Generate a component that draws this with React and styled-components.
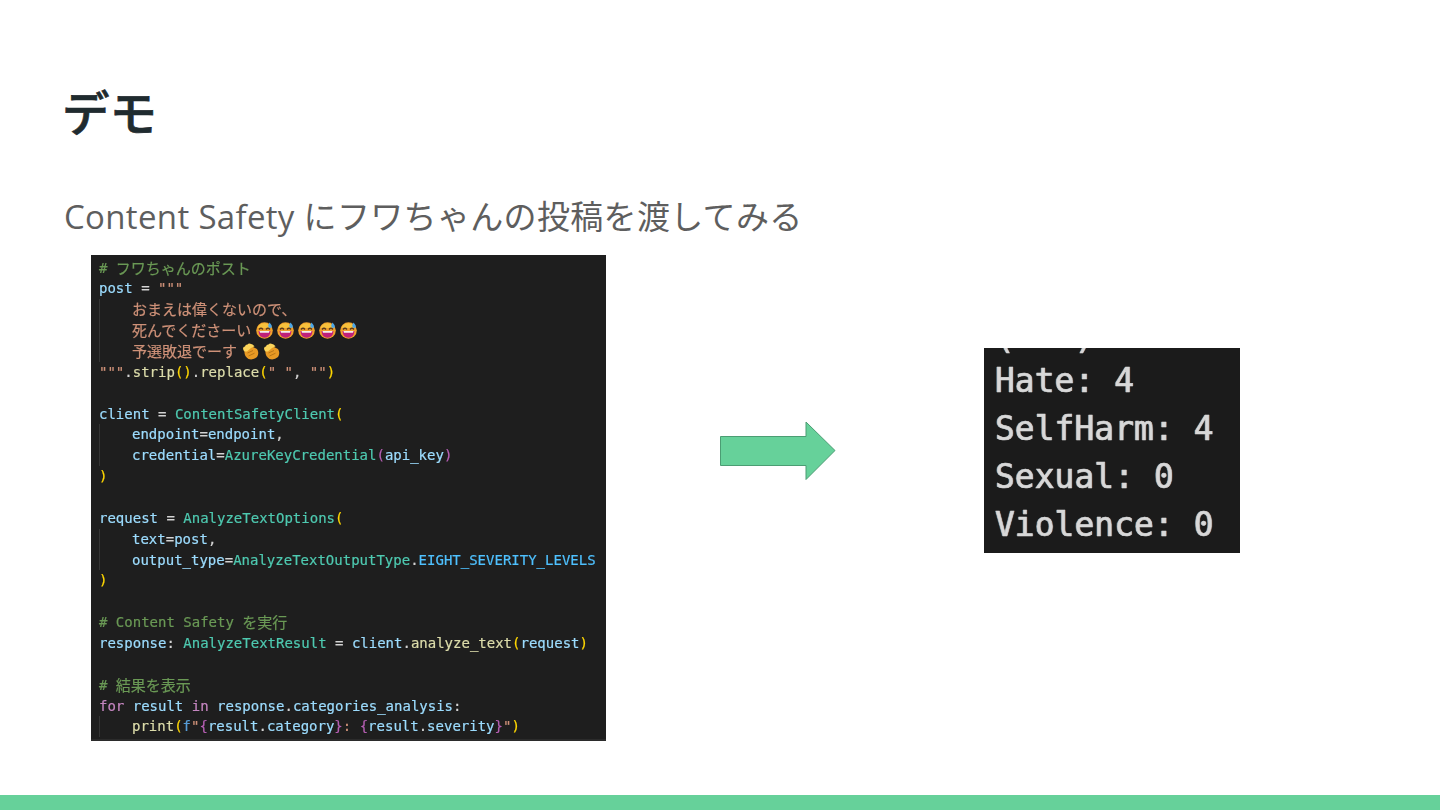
import React from "react";
import styled, { createGlobalStyle } from "styled-components";

const Global = createGlobalStyle`
  html, body { margin: 0; padding: 0; background: #fff; }
  #root { width: 1440px; height: 810px; }
`;

const Slide = styled.main`
  width: 1440px;
  height: 810px;
  overflow: hidden;
  display: flex;
  flex-direction: column;
  background: #fff;
  font-family: "Open Sans", "Noto Sans CJK JP", sans-serif;
`;

const Title = styled.h1`
  margin: 76px 0 0 62px;
  font: 500 47.5px/70px "Noto Sans CJK JP", sans-serif;
  -webkit-text-stroke: 0.7px currentColor;
  color: #1f2b2f;
`;

const Subtitle = styled.h2`
  margin: 46px 0 0 64px;
  font: 400 33px/50px "Open Sans", "Noto Sans CJK JP", sans-serif;
  letter-spacing: 0.33px;
  color: #5e5e5e;
`;

const Content = styled.section`
  display: flex;
  align-items: flex-start;
  padding-left: 91px;
  margin-top: 13px;
`;

const CodePanel = styled.div`
  flex: none;
  width: 515px;
  height: 486px;
  box-sizing: border-box;
  padding: 2.5px 0 0 8px;
  background: #1e1e1e;
  border-bottom: 2px solid #2b2b2b;
  font: 14px/20.86px "DejaVu Sans Mono", "Noto Sans CJK JP", monospace;
  color: #9cdcfe;
  white-space: pre;
  overflow: hidden;
  -webkit-text-stroke: 0.2px currentColor;
`;

const Line = styled.div`
  display: flex;
  align-items: center;
  height: 20.86px;
  filter: blur(0.35px);
`;

const Guide = styled.span`
  flex: none;
  align-self: stretch;
  width: 33px;
  box-sizing: border-box;
  border-left: 1px solid #343434;
`;

const Tok = styled.span`
  color: ${(p) => p.$c};
`;

const Ja = styled.span`
  font-family: "Noto Sans CJK JP", sans-serif;
  font-size: 15px;
  color: ${(p) => p.$c};
`;

const EmojiBox = styled.svg`
  flex: none;
  width: 17px;
  height: 17px;
  margin-left: ${(p) => p.$gap}px;
`;

const ArrowBox = styled.svg`
  flex: none;
  width: 116px;
  height: 60px;
  margin: 166px 0 0 114px;
`;

const ResultPanel = styled.div`
  flex: none;
  width: 256px;
  height: 205px;
  margin: 93px 0 0 148px;
  box-sizing: border-box;
  padding-left: 11px;
  background: #1b1b1b;
  color: #d8d8d8;
  font: 33px/48px "DejaVu Sans Mono", monospace;
  white-space: pre;
  overflow: hidden;
  -webkit-text-stroke: 0.6px currentColor;
`;

const ResultText = styled.div`
  margin-top: -39px;
  filter: blur(0.6px);
  text-shadow: -1px 0 rgba(120, 190, 230, 0.45), 1px 0 rgba(220, 130, 80, 0.35);
`;

const ClippedLine = styled.div`
  transform: translateY(5px);
`;

const Band = styled.footer`
  margin-top: auto;
  height: 15px;
  flex: none;
  background: #66d19a;
`;

const COMMENT = "#6a9955";
const STR = "#ce9178";
const CLS = "#4ec9b0";
const FN = "#dcdcaa";
const OP = "#d4d4d4";
const KW = "#c586c0";
const GOLD = "#ffd700";
const PINK = "#b65fb4";
const CONST = "#4fc1ff";
const BLUE = "#569cd6";

const SweatFace = ({ gap = 4 }) => (
  <EmojiBox $gap={gap} viewBox="0 0 17 17">
    <circle cx="8.5" cy="8.5" r="8.3" fill="#f0a02c" />
    <path d="M2 4.5A8.3 8.3 0 0 1 15 4.5L15 6 2 6Z" fill="#f7c13c" />
    <path d="M3 7.5Q5 5 7 7.5M10 7.5Q12 5 14 7.5" stroke="#5a3a1c" strokeWidth="1.3" fill="none" />
    <path d="M2.5 9H14.5Q14 15.8 8.5 15.8Q3 15.8 2.5 9Z" fill="#c0207a" />
    <path d="M3.5 9H13.5L13 10.8H4Z" fill="#f4f0ea" />
    <path d="M13.5 .5Q17 4 15.3 5.8Q12.8 6.4 12.2 4Q12.5 2.3 13.5 .5Z" fill="#4aa6e8" />
  </EmojiBox>
);

const Clap = ({ gap = 4 }) => (
  <EmojiBox $gap={gap} viewBox="0 0 17 17">
    <path d="M4 5L9 3L15 6Q17.5 10 15 14Q11 17.5 6.5 16Q2 13 2.5 8Z" fill="#e89a24" />
    <path d="M1 5.5Q1.2 3.6 3 3.6Q3.4 1.4 5.6 1.6Q6.4 .2 8.4 .8Q10.6 1.2 12.6 3.2L9 5 5 8.5 2.5 8.5Q1.2 7.4 1 5.5Z" fill="#fbd45a" />
    <path d="M5.5 10L11 7.5M6.5 13L12.5 10.2" stroke="#b97616" strokeWidth="1" fill="none" />
  </EmojiBox>
);

export default function App() {
  return (
    <Slide>
      <Global />
      <Title>デモ</Title>
      <Subtitle>Content Safety にフワちゃんの投稿を渡してみる</Subtitle>
      <Content>
        <CodePanel>
          <Line><Tok $c={COMMENT}># </Tok><Ja $c={COMMENT}>フワちゃんのポスト</Ja></Line>
          <Line>post <Tok $c={OP}>= </Tok><Tok $c={STR}>"""</Tok></Line>
          <Line><Guide /><Ja $c={STR}>おまえは偉くないので、</Ja></Line>
          <Line><Guide /><Ja $c={STR}>死んでくださーい</Ja><SweatFace gap={5} /><SweatFace /><SweatFace /><SweatFace /><SweatFace /></Line>
          <Line><Guide /><Ja $c={STR}>予選敗退でーす</Ja><Clap gap={5} /><Clap /></Line>
          <Line><Tok $c={STR}>"""</Tok><Tok $c={OP}>.</Tok><Tok $c={FN}>strip</Tok><Tok $c={GOLD}>()</Tok><Tok $c={OP}>.</Tok><Tok $c={FN}>replace</Tok><Tok $c={GOLD}>(</Tok><Tok $c={STR}>" "</Tok><Tok $c={OP}>, </Tok><Tok $c={STR}>""</Tok><Tok $c={GOLD}>)</Tok></Line>
          <Line />
          <Line>client <Tok $c={OP}>= </Tok><Tok $c={CLS}>ContentSafetyClient</Tok><Tok $c={GOLD}>(</Tok></Line>
          <Line><Guide />endpoint<Tok $c={OP}>=</Tok>endpoint<Tok $c={OP}>,</Tok></Line>
          <Line><Guide />credential<Tok $c={OP}>=</Tok><Tok $c={CLS}>AzureKeyCredential</Tok><Tok $c={PINK}>(</Tok>api_key<Tok $c={PINK}>)</Tok></Line>
          <Line><Tok $c={GOLD}>)</Tok></Line>
          <Line />
          <Line>request <Tok $c={OP}>= </Tok><Tok $c={CLS}>AnalyzeTextOptions</Tok><Tok $c={GOLD}>(</Tok></Line>
          <Line><Guide />text<Tok $c={OP}>=</Tok>post<Tok $c={OP}>,</Tok></Line>
          <Line><Guide />output_type<Tok $c={OP}>=</Tok><Tok $c={CLS}>AnalyzeTextOutputType</Tok><Tok $c={OP}>.</Tok><Tok $c={CONST}>EIGHT_SEVERITY_LEVELS</Tok></Line>
          <Line><Tok $c={GOLD}>)</Tok></Line>
          <Line />
          <Line><Tok $c={COMMENT}># Content Safety </Tok><Ja $c={COMMENT}>を実行</Ja></Line>
          <Line>response<Tok $c={OP}>: </Tok><Tok $c={CLS}>AnalyzeTextResult</Tok><Tok $c={OP}> = </Tok>client<Tok $c={OP}>.</Tok><Tok $c={FN}>analyze_text</Tok><Tok $c={GOLD}>(</Tok>request<Tok $c={GOLD}>)</Tok></Line>
          <Line />
          <Line><Tok $c={COMMENT}># </Tok><Ja $c={COMMENT}>結果を表示</Ja></Line>
          <Line><Tok $c={KW}>for</Tok> result <Tok $c={KW}>in</Tok> response<Tok $c={OP}>.</Tok>categories_analysis<Tok $c={OP}>:</Tok></Line>
          <Line><Guide /><Tok $c={FN}>print</Tok><Tok $c={GOLD}>(</Tok><Tok $c={BLUE}>f</Tok><Tok $c={STR}>"</Tok><Tok $c={PINK}>{"{"}</Tok>result<Tok $c={OP}>.</Tok>category<Tok $c={PINK}>{"}"}</Tok><Tok $c={STR}>: </Tok><Tok $c={PINK}>{"{"}</Tok>result<Tok $c={OP}>.</Tok>severity<Tok $c={PINK}>{"}"}</Tok><Tok $c={STR}>"</Tok><Tok $c={GOLD}>)</Tok></Line>
        </CodePanel>
        <ArrowBox viewBox="0 0 116 60">
          <path d="M0.5 15.5H86V1L115 29.5 86 58.5V44.5H0.5Z" fill="#66d19a" stroke="#4b9d73" strokeWidth="1" />
        </ArrowBox>
        <ResultPanel>
          <ResultText>
            <ClippedLine>{"(   )"}</ClippedLine>
            {"Hate: 4\nSelfHarm: 4\nSexual: 0\nViolence: 0"}
          </ResultText>
        </ResultPanel>
      </Content>
      <Band />
    </Slide>
  );
}
